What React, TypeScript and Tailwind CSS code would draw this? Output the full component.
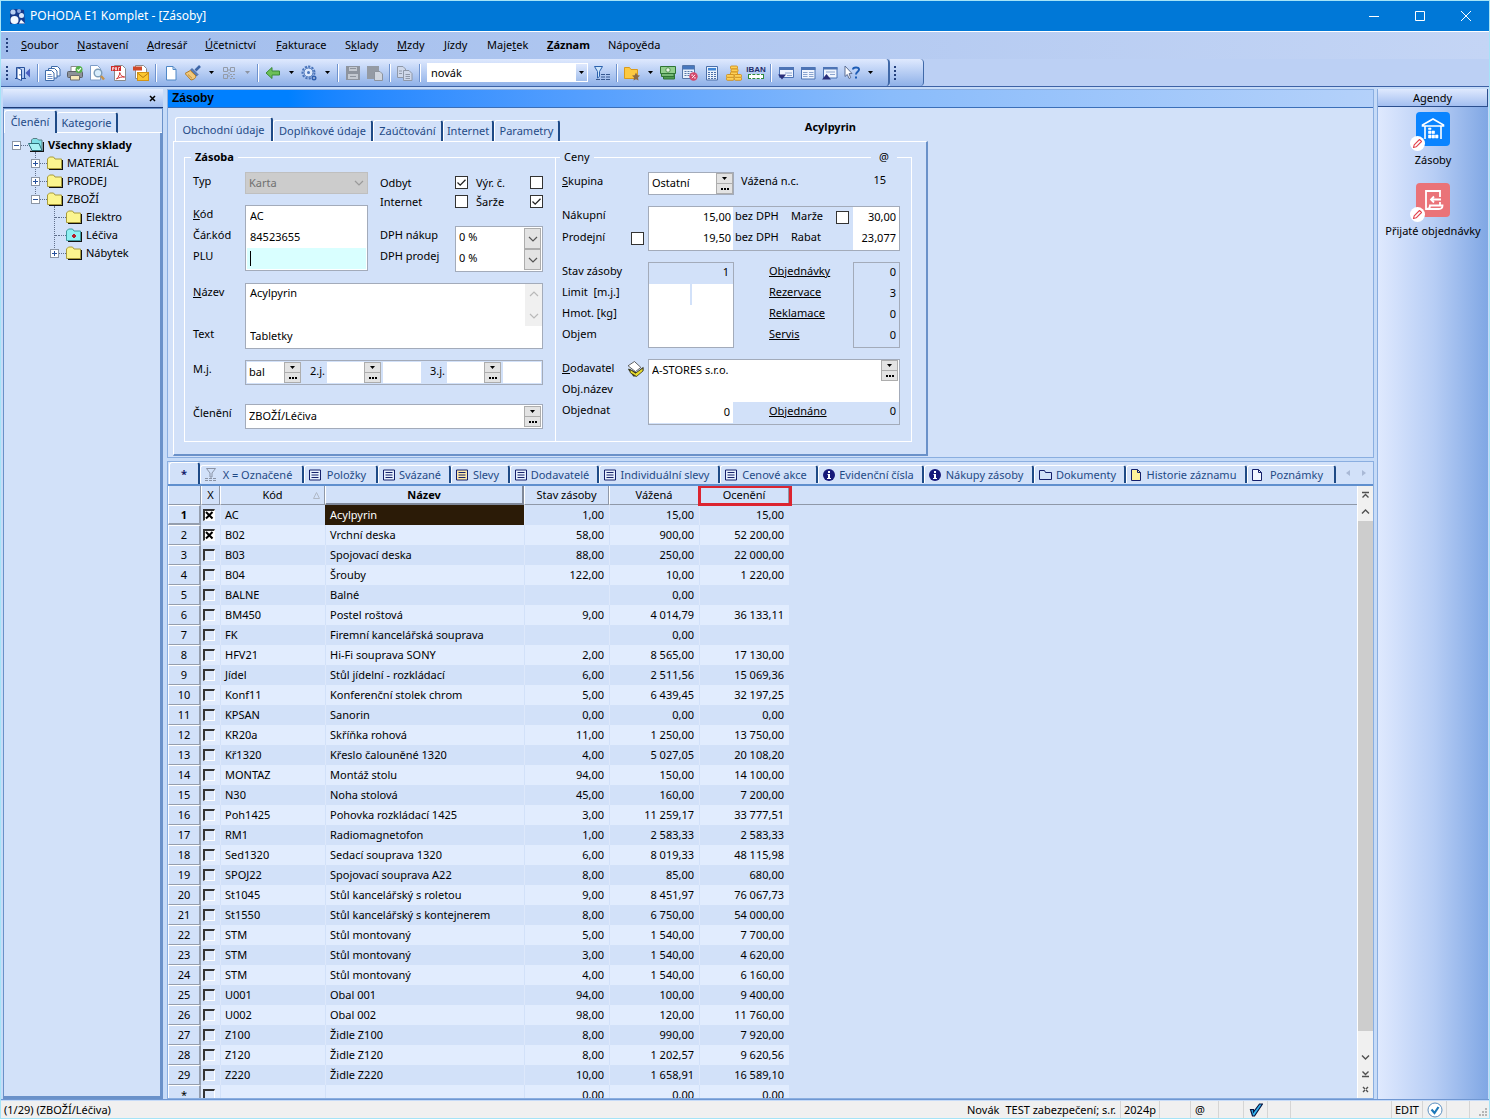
import React from 'react';
import clsx from 'clsx';

/* ---------- toolbar glyphs ---------- */

const Svg = ({ children, size = 16 }: { children: React.ReactNode; size?: number }) => (
  <svg width={size} height={size} viewBox="0 0 16 16" fill="none" aria-hidden="true" className="shrink-0">
    {children}
  </svg>
);

const icons: Record<string, React.ReactNode> = {
  door: (
    <Svg>
      <path d="M1.500 13.500V2.500h8v11M0 13.500h11" stroke="#27509b" />
      <path d="M2 2.500l4.500 2v11L2 13.500z" fill="#fff" stroke="#27509b" />
      <path d="M5 9v1.500" stroke="#27509b" />
      <path d="M15 3.500v9L10.500 8z" fill="#4a5fc0" />
    </Svg>
  ),
  copies: (
    <Svg>
      <path d="M6.500 1.500h6l2.500 2.500v7h-8.500z" fill="#fff" stroke="#3d6aa8" />
      <path d="M3.500 3.500h6l2.500 2.500v7h-8.500z" fill="#fff" stroke="#3d6aa8" />
      <path d="M.5 5.500h6l2.500 2.500v7.500h-8.500z" fill="#fff" stroke="#3d6aa8" />
      <path d="M2.500 9.500h4M2.500 11.500h5M2.500 13.500h5" stroke="#6c8fc4" />
    </Svg>
  ),
  printer: (
    <Svg>
      <path d="M4 1.500h8V7H4z" fill="#fff" stroke="#8a8a8a" />
      <rect x="0.500" y="6.500" width="15" height="6" rx="1" fill="#8d9299" stroke="#5c6066" />
      <path d="M3.500 10.500h9v4.500h-9z" fill="#f6e9bb" stroke="#6d6d6d" />
      <circle cx="12" cy="4.500" r="3.500" fill="#54b04a" />
      <path d="M10.300 4.500l1.400 1.400 2.200-2.800" stroke="#fff" strokeWidth="1.200" />
    </Svg>
  ),
  preview: (
    <Svg>
      <path d="M1.500.5h7l3 3v11.500h-10z" fill="#fff" stroke="#7d9cc8" />
      <circle cx="9" cy="8" r="3.800" fill="#d7ecfb" stroke="#7c9cb8" strokeWidth="1.400" />
      <path d="M12 11l3 3.500" stroke="#c6924a" strokeWidth="2.400" />
    </Svg>
  ),
  pdf: (
    <Svg>
      <path d="M3.500.5h8l3 3v12h-11z" fill="#fff" stroke="#8b8b8b" />
      <path d="M0 1h10v5H0z" fill="#cf2b2b" />
      <path d="M1.500 5.500V2.500h1.500v1.500H1.500M4.500 2.500v2.500h1v-2.500zM7.500 5.500V2.500H9" stroke="#fff" strokeWidth=".7" />
      <path d="M5.500 14c2-2 3.200-4 3.200-6.500 1 3 2.500 4.500 5 4.500-2.500-.3-5.500.3-8.200 2z" stroke="#d03535" />
    </Svg>
  ),
  mail: (
    <Svg>
      <path d="M2.500.5h8l3 3v10h-11z" fill="#fff" stroke="#8b8b8b" />
      <path d="M0 1.500h9v4H0z" fill="#cf4a2b" />
      <rect x="4.500" y="7.500" width="11" height="8" fill="#fbc62f" stroke="#d39417" />
      <path d="M4.500 8l5.500 4.500L15.500 8" stroke="#b97c10" />
    </Svg>
  ),
  page: (
    <Svg>
      <path d="M3.500 1.500h6.500l3 3v10.500h-9.500z" fill="#fff" stroke="#4f87c6" />
      <path d="M10 1.500v3h3" stroke="#4f87c6" />
    </Svg>
  ),
  brush: (
    <Svg>
      <path d="M15 1l-4.500 4.500" stroke="#3e66a8" strokeWidth="2.600" />
      <path d="M7 3.500l6 6-1.500 1.500-6-6z" fill="#5c7fb8" stroke="#32548f" strokeWidth=".7" />
      <path d="M5.300 5.500L0 8.500 6 15c3.500-.5 4.500-2 5-4z" fill="#f1c87a" stroke="#b17c28" />
      <path d="M3 9.500l4 3.800" stroke="#c08d3a" />
    </Svg>
  ),
  qr: (
    <Svg>
      <g stroke="#949ba7">
        <path d="M2.500 2.500h4v4h-4zM9.500 2.500h4v4h-4zM2.500 9.500h4v4h-4z" />
        <path d="M9 9.500h2M12 9.500h2M10 11.500h3M9 13.500h2M12 13.500h2M8 4v8" strokeDasharray="2 1" />
      </g>
    </Svg>
  ),
  back: (
    <Svg>
      <path d="M1 8l6-5.500v3.500h7.500v4H7v3.500z" fill="#6cbf57" stroke="#3b8a36" />
    </Svg>
  ),
  gear: (
    <Svg>
      <circle cx="7.500" cy="7.500" r="6" fill="#b9cff2" stroke="#4a74ba" strokeWidth="2" strokeDasharray="2.200 1.200" />
      <circle cx="7.500" cy="7.500" r="4.500" fill="#dce8fb" stroke="#4a74ba" />
      <circle cx="7.500" cy="7.500" r="1.500" fill="#4a74ba" />
      <circle cx="13" cy="13" r="2.500" fill="#2f5fae" />
      <circle cx="13" cy="13" r=".8" fill="#fff" />
    </Svg>
  ),
  save: (
    <Svg>
      <path d="M1 1h14v14H1z" fill="#8e949e" />
      <path d="M4 2h8v4H4zM3 9h10v5H3z" fill="#c3c8d0" />
      <path d="M5 3.500h6M5 11.500h6" stroke="#8e949e" />
    </Svg>
  ),
  paste: (
    <Svg>
      <path d="M0 1h12v13H0z" fill="#949aa4" />
      <path d="M7.500 6.500h5.500l2.500 2.500v6.500h-8z" fill="#d0d5de" stroke="#8e949e" />
    </Svg>
  ),
  copy: (
    <Svg>
      <path d="M.5 1.500h5.500l2.500 2.500v8.500h-8z" fill="#cfd8ea" stroke="#8f98a8" />
      <path d="M6.500 5.500H12l3 3v7H6.500z" fill="#cfd8ea" stroke="#8f98a8" />
      <path d="M2 6h3M2 8.500h3M8.500 9.500h4.500M8.500 11.500h4.500M8.500 13.500h4.500" stroke="#8f98a8" />
    </Svg>
  ),
  filter: (
    <Svg>
      <path d="M.5 1.500h8L5.500 6.500v5l-2 1.500V6.500z" fill="#cfe6fb" stroke="#2c62ad" />
      <path d="M2 14.500h4M7 14.500h4M12 14.500h4M7 12h4M12 12h4M7 9.500h4M12 9.500h4" stroke="#36588f" />
    </Svg>
  ),
  folderStar: (
    <Svg>
      <path d="M.5 2.500h5l1.500 2h6.500v9H.5z" fill="#fdc940" stroke="#d99a1c" />
      <path d="M12 7.500l1.300 2.700 2.700.4-2 2 .5 3-2.500-1.400-2.500 1.400.5-3-2-2 2.700-.4z" fill="#8d6a44" />
    </Svg>
  ),
  money: (
    <Svg>
      <path d="M3.500 9.500h11v4.500h-11z" fill="#4f9a4f" stroke="#2f7534" />
      <path d="M1.500 6h12.500v5.500H1.500z" fill="#78b978" stroke="#2f7534" />
      <path d="M.5 1.500h15v7H.5z" fill="#93cf8e" stroke="#2f7534" />
      <circle cx="8" cy="5" r="2.200" fill="#e8f6e4" stroke="#2f7534" strokeWidth=".7" />
    </Svg>
  ),
  calcPercent: (
    <Svg>
      <path d="M.5.5h12v13H.5z" fill="#e9f1fc" stroke="#5676a8" />
      <path d="M1 1h11v3.500H1z" fill="#4777bd" />
      <path d="M2.500 6.500h8M2.500 8.500h8M2.500 10.500h6" stroke="#5676a8" strokeDasharray="2 1" />
      <circle cx="11.500" cy="11.500" r="4.200" fill="#d4466b" />
      <path d="M10 13.200l3-3.400" stroke="#fff" />
      <path d="M9.500 9.500h1.300v1.300H9.500zM12.300 12.300h1.300v1.300h-1.300z" fill="#fff" />
    </Svg>
  ),
  calc: (
    <Svg>
      <path d="M2.500 1.500h11v13.500h-11z" fill="#e9f1fc" stroke="#4b6ea8" />
      <path d="M4 3h8v2.500H4z" fill="#3f86d6" />
      <path d="M4 7.500h8M4 9.500h8M4 11.500h8M4 13.500h8" stroke="#4b6ea8" strokeDasharray="2 1" />
    </Svg>
  ),
  coins: (
    <Svg>
      <g fill="#fdd058" stroke="#cf8f1c" strokeWidth=".9">
        <rect x="4.500" y="1" width="7" height="3" rx="1" />
        <rect x="5" y="4" width="7" height="3" rx="1" />
        <rect x="4.500" y="7" width="7" height="3" rx="1" />
        <rect x=".5" y="9.500" width="7.500" height="3" rx="1" />
        <rect x=".5" y="12.300" width="7.500" height="3" rx="1" />
        <rect x="8.500" y="9.500" width="7" height="3" rx="1" />
        <rect x="8.500" y="12.300" width="7" height="3" rx="1" />
      </g>
    </Svg>
  ),
  detail1: (
    <Svg>
      <path d="M1.500 2.500h14v10h-14z" fill="#f0f5fe" stroke="#4d74b5" />
      <path d="M1 2h15v3H1z" fill="#4d74b5" />
      <path d="M7 8h7M9 10.500h5" stroke="#8aa4cf" />
      <path d="M0 9.500h8l-4 5z" fill="#2a2f7a" />
    </Svg>
  ),
  detail2: (
    <Svg>
      <path d="M1.500 2.500h13.500v11.500h-13.500z" fill="#f0f5fe" stroke="#4d74b5" />
      <path d="M1 2h14.500v3H1z" fill="#4d74b5" />
      <path d="M3 7.500h4.500M9 7.500h4.500M3 9.500h4.500M9 9.500h4.500M3 11.500h4.500M9 11.500h4.500" stroke="#8aa4cf" />
    </Svg>
  ),
  detail3: (
    <Svg>
      <path d="M1.500 2.500h13.500v10.500h-13.500z" fill="#f0f5fe" stroke="#4d74b5" />
      <path d="M1 2h14.500v2.500H1z" fill="#4d74b5" />
      <path d="M4 7h9M8 9.500h5" stroke="#8aa4cf" />
      <path d="M0 14.500h9l-4.500-5.500z" fill="#2a2f7a" />
    </Svg>
  ),
};

const ChevronDown = ({ color = '#555' }: { color?: string }) => (
  <svg width="10" height="6" viewBox="0 0 10 6" fill="none" aria-hidden="true">
    <path d="M1 1l4 4 4-4" stroke={color} strokeWidth="1.200" />
  </svg>
);

const Caret = ({ color = '#000' }: { color?: string }) => (
  <svg width="5" height="3" viewBox="0 0 5 3" aria-hidden="true">
    <path d="M0 0h5L2.500 3z" fill={color} />
  </svg>
);

/* ---------- toolbar ---------- */

const ToolBtn = ({ icon, label }: { icon: string; label: string }) => (
  <button type="button" aria-label={label} className="flex h-6 w-[22px] items-center justify-center">
    {icons[icon]}
  </button>
);
const Drop = ({ dim }: { dim?: boolean }) => (
  <button type="button" aria-label="Další možnosti" className="flex h-6 w-[14px] items-center justify-center">
    <Caret color={dim ? '#8c93a0' : '#000'} />
  </button>
);
const Sep = () => (
  <span className="flex w-2 justify-center">
    <span className="h-[18px] w-[2px] border-l border-[#6f93cf] bg-white" />
  </span>
);
const Grip = () => (
  <span className="flex flex-col gap-[2px]">
    {[0, 1, 2, 3].map((i) => (
      <span key={i} className="size-[2px] bg-[#24407c]" />
    ))}
  </span>
);

const Toolbar = () => (
  <div className="flex h-[28px] shrink-0 border-b border-[#3d62a5] bg-[#bcd0f4]">
    <div className="flex items-center rounded-r-sm border-r-2 border-[#4069a8] bg-linear-to-b from-[#dfe9fe] to-[#8fb1e8] pr-[11px] pl-[5px]">
      <span className="w-[6px]"><Grip /></span>
      <ToolBtn icon="door" label="Zavřít agendu" />
      <Sep />
      <ToolBtn icon="copies" label="Sestavy" />
      <ToolBtn icon="printer" label="Tisk" />
      <ToolBtn icon="preview" label="Náhled" />
      <ToolBtn icon="pdf" label="Export PDF" />
      <ToolBtn icon="mail" label="Odeslat PDF" />
      <Sep />
      <ToolBtn icon="page" label="Nový" />
      <ToolBtn icon="brush" label="Formát" />
      <Drop />
      <ToolBtn icon="qr" label="QR kód" />
      <Drop dim />
      <Sep />
      <ToolBtn icon="back" label="Zpět" />
      <Drop />
      <ToolBtn icon="gear" label="Nastavení" />
      <Drop />
      <Sep />
      <ToolBtn icon="save" label="Uložit" />
      <ToolBtn icon="paste" label="Vložit" />
      <Sep />
      <ToolBtn icon="copy" label="Kopírovat" />
      <Sep />
      <span className="mx-[3px] flex h-[19px] w-[161px] bg-white">
        <input aria-label="Hledat" defaultValue="novák" className="min-w-0 flex-1 pl-1 outline-none" />
        <button type="button" aria-label="Historie hledání" className="m-px flex w-[11px] items-center justify-center bg-linear-to-b from-[#dfe9fe] to-[#a3bfec]">
          <Caret />
        </button>
      </span>
      <ToolBtn icon="filter" label="Filtr" />
      <Sep />
      <ToolBtn icon="folderStar" label="Oblíbené" />
      <Drop />
      <ToolBtn icon="money" label="Pokladna" />
      <ToolBtn icon="calcPercent" label="Kalkulačka DPH" />
      <ToolBtn icon="calc" label="Kalkulačka" />
      <ToolBtn icon="coins" label="Měny" />
      <button type="button" className="flex h-6 w-[22px] flex-col items-center justify-center font-['Liberation_Sans'] text-[8px] leading-[8px] font-bold text-[#1f2d6b]">
        IBAN
        <span className="h-[5px] w-4 border border-dashed border-[#2e8a3d] bg-white" />
      </button>
      <Sep />
      <ToolBtn icon="detail1" label="Zobrazit tabulku" />
      <ToolBtn icon="detail2" label="Zobrazit vše" />
      <ToolBtn icon="detail3" label="Zobrazit formulář" />
      <button type="button" aria-label="Nápověda" className="flex h-6 w-[22px] items-center justify-center">
        <Svg>
          <path d="M1 1l7 7.500-3 .2 1.700 4-1.700.8-1.700-4L1 11.500z" fill="#fff" stroke="#5c6e94" />
          <path d="M9 4.500C9 2 15 1.500 15 4.500c0 2.300-3 2.200-3 5" stroke="#1e5db5" strokeWidth="2" />
          <path d="M11 11.500h2v2h-2z" fill="#1e5db5" />
        </Svg>
      </button>
      <Drop />
    </div>
    <div className="flex w-[34px] items-center rounded-r-sm border-r border-[#4069a8] bg-linear-to-b from-[#dfe9fe] to-[#8fb1e8] pl-1">
      <Grip />
    </div>
  </div>
);

/* ---------- menu ---------- */

const menu: { pre?: string; key: string; post: string; w: string; bold?: boolean }[] = [
  { key: 'S', post: 'oubor', w: 'w-[56px]' },
  { key: 'N', post: 'astavení', w: 'w-[70px]' },
  { key: 'A', post: 'dresář', w: 'w-[58px]' },
  { key: 'Ú', post: 'četnictví', w: 'w-[71px]' },
  { key: 'F', post: 'akturace', w: 'w-[69px]' },
  { pre: 'S', key: 'k', post: 'lady', w: 'w-[52px]' },
  { key: 'M', post: 'zdy', w: 'w-[47px]' },
  { key: 'J', post: 'ízdy', w: 'w-[43px]' },
  { pre: 'Maje', key: 't', post: 'ek', w: 'w-[60px]' },
  { key: 'Z', post: 'áznam', w: 'w-[61px]', bold: true },
  { pre: 'Nápo', key: 'v', post: 'ěda', w: 'w-[62px]' },
];

/* ---------- tree ---------- */

const Folder = ({ kind = 'closed' }: { kind?: 'closed' | 'open' | 'current' }) => (
  <svg width="16" height="14" viewBox="0 0 16 14" aria-hidden="true" className="shrink-0">
    <path d="M2 13.500h13.500V4" fill="none" stroke="#111" strokeWidth="1.500" />
    {kind === 'open' ? (
      <>
        <path d="M3.500 5V2l1.500-1.500h4L10.500 2H14v10.500" fill="#7ee0e6" stroke="#5a7f86" />
        <path d="M.5 5.500H11l3 7H4z" fill="#a8f2f4" stroke="#2c6f78" />
      </>
    ) : (
      <path
        d="M.5 12.500V3L2.500 1h4L8 3h6.500v9.500z"
        fill={kind === 'current' ? '#8ff0f2' : '#fbf58f'}
        stroke={kind === 'current' ? '#3e9aa0' : '#a89b3c'}
      />
    )}
    {kind === 'current' && <path d="M7 6h2v4H7zM6 7h4v2H6z" fill="#b5202a" />}
  </svg>
);

const Expander = ({ open }: { open?: boolean }) => (
  <button
    type="button"
    aria-label={open ? 'Sbalit' : 'Rozbalit'}
    className="z-10 grid size-[9px] shrink-0 place-items-center border border-[#8c96a5] bg-white"
  >
    <svg width="5" height="5" viewBox="0 0 5 5" aria-hidden="true">
      <path d={open ? 'M0 2.500h5' : 'M0 2.500h5M2.500 0v5'} stroke="#27509b" />
    </svg>
  </button>
);

const treeRows: { label: string; pad: string; exp?: 'open' | 'closed'; kind?: 'closed' | 'open' | 'current'; bold?: boolean }[] = [
  { label: 'Všechny sklady', pad: 'pl-2', exp: 'open', kind: 'open', bold: true },
  { label: 'MATERIÁL', pad: 'pl-[27px]', exp: 'closed' },
  { label: 'PRODEJ', pad: 'pl-[27px]', exp: 'closed' },
  { label: 'ZBOŽÍ', pad: 'pl-[27px]', exp: 'open' },
  { label: 'Elektro', pad: 'pl-[46px]' },
  { label: 'Léčiva', pad: 'pl-[46px]', kind: 'current' },
  { label: 'Nábytek', pad: 'pl-[46px]', exp: 'closed' },
];

const Sidebar = () => (
  <aside className="flex w-[160px] shrink-0 flex-col">
    <div className="flex h-[19px] items-center justify-end border-b border-[#1d3a75] bg-linear-to-b from-[#e3ecfe] to-[#a3bff0] pr-[6px]">
      <button type="button" aria-label="Zavřít panel" className="flex size-[9px] items-center justify-center">
        <svg width="7" height="7" viewBox="0 0 7 7" aria-hidden="true">
          <path d="M1 1l5 5M6 1L1 6" stroke="#000" strokeWidth="1.500" />
        </svg>
      </button>
    </div>
    <div className="flex flex-1 flex-col border border-[#6a91c9] bg-[#d2e1f9]">
      <div className="flex h-[24px] items-end pt-px text-[#1f4a86]">
        <button type="button" className="h-[23px] w-[53px] rounded-t-[3px] border-t border-r-2 border-l border-t-white border-r-[#1e4a86] border-l-white">Členění</button>
        <button type="button" className="h-[21px] w-[61px] rounded-t-[3px] border-t border-r-2 border-b border-white border-r-[#1e4a86]">Kategorie</button>
        <span className="flex-1 border-b border-white" />
      </div>
      <ul className="relative flex-1 border-r-2 border-b-2 border-[#6a91c9] pt-[3px]">
        <li aria-hidden="true" className="absolute top-[19px] left-[31px] h-[50px] border-l border-dotted border-[#5f6f8c]" />
        <li aria-hidden="true" className="absolute top-[73px] left-[50px] h-[50px] border-l border-dotted border-[#5f6f8c]" />
        {treeRows.map((r) => (
          <li key={r.label} className={clsx('flex h-[18px] items-center', r.pad)}>
            {r.exp ? <Expander open={r.exp === 'open'} /> : <span className="ml-[5px] w-1 border-t border-dotted border-[#5f6f8c]" />}
            <span className="w-[7px] border-t border-dotted border-[#5f6f8c]" />
            <Folder kind={r.kind} />
            <span className={clsx('pl-1 whitespace-nowrap', r.bold && 'font-bold')}>{r.label}</span>
          </li>
        ))}
      </ul>
    </div>
  </aside>
);

/* ---------- form pieces ---------- */

const box = 'border border-[#a3abba] bg-white';

const Spin = ({ label }: { label: string }) => (
  <span className="flex w-[17px] shrink-0 flex-col">
    <button type="button" aria-label={label + ' – seznam'} className="grid h-[11px] place-items-center border border-[#adadad] bg-[#e3e3e3]">
      <Caret />
    </button>
    <button type="button" aria-label={label + ' – výběr'} className="flex h-[10px] items-center justify-center gap-px border border-t-0 border-[#adadad] bg-[#e3e3e3]">
      <span className="size-[2px] bg-black" />
      <span className="size-[2px] bg-black" />
      <span className="size-[2px] bg-black" />
    </button>
  </span>
);

const Check = ({ id, on }: { id: string; on?: boolean }) => (
  <span className="grid size-[13px] shrink-0">
    <input id={id} type="checkbox" defaultChecked={on} className="peer col-start-1 row-start-1 size-[13px] appearance-none border border-[#333] bg-white" />
    <svg width="13" height="13" viewBox="0 0 13 13" fill="none" aria-hidden="true" className="pointer-events-none invisible col-start-1 row-start-1 peer-checked:visible">
      <path d="M2.500 6.500l2.700 2.700 5.300-5.400" stroke="#222" strokeWidth="1.300" />
    </svg>
  </span>
);

const Label = ({ htmlFor, children, className }: { htmlFor: string; children: React.ReactNode; className?: string }) => (
  <label htmlFor={htmlFor} className={clsx('flex h-[21px] items-center pb-[3px] whitespace-pre', className)}>
    {children}
  </label>
);

const Field = ({ id, value = '', className, label, bg = 'bg-white' }: { id?: string; value?: string; className?: string; label?: string; bg?: string }) => (
  <input id={id} aria-label={label} defaultValue={value} className={clsx('h-[21px] min-w-0 pb-[3px] outline-none', bg, className)} />
);

const VatSelect = ({ id }: { id: string }) => (
  <span className="relative flex h-[21px]">
    <select id={id} className="w-full appearance-none bg-white pb-[3px] pl-[2px] outline-none">
      <option>0 %</option>
    </select>
    <span className="pointer-events-none absolute inset-y-0 right-0 grid w-[17px] place-items-center border border-[#adadad] bg-[#e3e3e3]">
      <ChevronDown />
    </span>
  </span>
);

const formTabs: [string, string][] = [
  ['Obchodní údaje', 'w-[98px]'],
  ['Doplňkové údaje', 'w-[100px]'],
  ['Zaúčtování', 'w-[70px]'],
  ['Internet', 'w-[51px]'],
  ['Parametry', 'w-[66px]'],
];

const StockFieldset = () => (
  <fieldset className="w-[372px] border border-white">
    <legend className="ml-[6px] flex h-5 items-center px-1 font-bold">Zásoba</legend>
    <div className="flex flex-col gap-[11px] pt-[5px] pb-3 pl-2">
      <div className="flex">
        <div className="w-[52px]">
          <Label htmlFor="typ">Typ</Label>
          <div className="pt-[12px]">
            <Label htmlFor="kod"><u>K</u>ód</Label>
            <Label htmlFor="ean">Čár.kód</Label>
            <Label htmlFor="plu">PLU</Label>
          </div>
        </div>
        <div className="w-[123px]">
          <span className="relative flex h-[22px]">
            <select id="typ" disabled className="w-full appearance-none border border-[#bfbfbf] bg-[#cccccc] pl-[3px] text-[#707070] opacity-100">
              <option>Karta</option>
            </select>
            <span className="pointer-events-none absolute inset-y-0 right-1 grid place-items-center">
              <ChevronDown color="#9a9a9a" />
            </span>
          </span>
          <div className={clsx(box, 'mt-[11px] flex flex-col pb-px')}>
            <Field id="kod" value="AC" className="pl-1" />
            <Field id="ean" value="84523655" className="pl-1" />
            <span className="mx-px flex bg-[#d9ffff] pl-[3px]">
              <span className="my-[3px] w-px bg-black" />
              <Field id="plu" className="flex-1" bg="bg-[#d9ffff]" />
            </span>
          </div>
        </div>
        <div className="ml-3 flex flex-col pt-px">
          <div className="flex h-[19px] items-center">
            <label htmlFor="odbyt" className="w-[75px]">Odbyt</label>
            <Check id="odbyt" on />
            <label htmlFor="vyr" className="ml-2 w-[54px]">Výr. č.</label>
            <Check id="vyr" />
          </div>
          <div className="flex h-[19px] items-center">
            <label htmlFor="internet" className="w-[75px]">Internet</label>
            <Check id="internet" />
            <label htmlFor="sarze" className="ml-2 w-[54px]">Šarže</label>
            <Check id="sarze" on />
          </div>
          <div className="mt-[15px] flex">
            <div className="w-[75px]">
              <Label htmlFor="dphn">DPH nákup</Label>
              <Label htmlFor="dphp">DPH prodej</Label>
            </div>
            <div className={clsx(box, 'w-[88px] p-px')}>
              <VatSelect id="dphn" />
              <VatSelect id="dphp" />
            </div>
          </div>
        </div>
      </div>

      <div className="flex">
        <div className="flex w-[52px] flex-col justify-between pb-[3px]">
          <Label htmlFor="nazev"><u>N</u>ázev</Label>
          <Label htmlFor="text">Text</Label>
        </div>
        <div className={clsx(box, 'w-[298px] pb-px')}>
          <div className="flex h-[42px]">
            <textarea id="nazev" defaultValue="Acylpyrin" className="flex-1 resize-none pt-px pl-1 leading-4 outline-none" />
            <span className="flex w-[17px] flex-col items-center justify-between bg-[#f0f0f0] py-[7px]">
              <span className="flex rotate-180"><ChevronDown color="#b9b9b9" /></span>
              <ChevronDown color="#b9b9b9" />
            </span>
          </div>
          <Field id="text" value="Tabletky" className="block w-full pl-1" />
        </div>
      </div>

      <div className="flex">
        <Label htmlFor="mj" className="w-[52px]">M.j.</Label>
        <div className={clsx('flex w-[298px] border border-[#a3abba] p-px')}>
          <Field id="mj" value="bal" className="w-[37px] pl-[2px]" />
          <Spin label="Měrná jednotka" />
          <Label htmlFor="mj2" className="w-[26px] justify-end pr-[2px]">2.j.</Label>
          <Field id="mj2" className="w-[37px]" />
          <Spin label="2. jednotka" />
          <Field label="Koeficient 2. jednotky" className="ml-[2px] w-[38px]" />
          <Label htmlFor="mj3" className="w-[26px] justify-end pr-[2px]">3.j.</Label>
          <Field id="mj3" className="w-[37px]" />
          <Spin label="3. jednotka" />
          <Field label="Koeficient 3. jednotky" className="ml-[2px] flex-1" />
        </div>
      </div>

      <div className="flex pt-2">
        <Label htmlFor="cleneni" className="w-[52px]">Členění</Label>
        <div className={clsx(box, 'flex w-[298px] p-px')}>
          <Field id="cleneni" value="ZBOŽÍ/Léčiva" className="flex-1 pl-[2px]" />
          <Spin label="Členění" />
        </div>
      </div>
    </div>
  </fieldset>
);

const PriceFieldset = () => (
  <fieldset className="relative w-[356px] border border-l-0 border-white">
    <legend className="ml-1 flex h-5 items-center px-1">Ceny</legend>
    <span className="absolute -top-5 right-[14px] bg-[#d2e1f9] px-2 leading-5">@</span>
    <div className="flex flex-col gap-[11px] pt-[5px] pl-[6px]">
      <div className="flex">
        <Label htmlFor="skupina" className="w-[86px]"><u>S</u>kupina</Label>
        <div className={clsx(box, 'flex w-[86px]')}>
          <Field id="skupina" value="Ostatní" className="flex-1 pl-[3px]" />
          <Spin label="Skupina" />
        </div>
        <span className="ml-[7px] w-[100px] leading-[17px]">Vážená n.c.</span>
        <span className="w-[45px] text-right leading-[16px]">15</span>
      </div>

      <div className="flex">
        <div className="w-[86px]">
          <Label htmlFor="nakupni">Nákupní</Label>
          <div className="flex h-[23px] items-center justify-between pr-1">
            <Label htmlFor="prodejni">Prodejní</Label>
            <span className="flex">
              <Check id="prodejni-pevna" />
              <label htmlFor="prodejni-pevna" className="sr-only">Pevná prodejní cena</label>
            </span>
          </div>
        </div>
        <div className="flex w-[252px] border border-[#a3abba]">
          <div className="flex w-[84px] shrink-0 flex-col bg-white pb-px">
            <Field id="nakupni" value="15,00" className="pr-[2px] text-right" />
            <Field id="prodejni" value="19,50" className="pr-[2px] text-right" />
          </div>
          <div className="w-[58px] shrink-0 pl-[2px]">
            <span className="block h-[21px] leading-[18px] whitespace-nowrap">bez DPH</span>
            <span className="block h-[21px] leading-[18px] whitespace-nowrap">bez DPH</span>
          </div>
          <div className="w-[62px] shrink-0">
            <div className="flex h-[21px] items-center justify-between pr-1">
              <Label htmlFor="marze-pevna">Marže</Label>
              <Check id="marze-pevna" />
            </div>
            <Label htmlFor="rabat">Rabat</Label>
          </div>
          <div className="flex min-w-0 flex-1 flex-col bg-white">
            <Field label="Marže" value="30,00" className="pr-[3px] text-right" />
            <Field id="rabat" value="23,077" className="pr-[3px] text-right" />
          </div>
        </div>
      </div>

      <div className="flex">
        <div className="w-[86px]">
          <Label htmlFor="stav">Stav zásoby</Label>
          <Label htmlFor="limit">{'Limit  [m.j.]'}</Label>
          <Label htmlFor="hmot">Hmot. [kg]</Label>
          <Label htmlFor="objem">Objem</Label>
        </div>
        <div className="flex w-[86px] flex-col border border-[#a3abba]">
          <output id="stav" className="block h-[21px] pr-1 text-right leading-[17px]">1</output>
          <span className="flex gap-[2px]">
            <Field id="limit" className="flex-1" />
            <Field label="Horní limit" className="flex-1" />
          </span>
          <Field id="hmot" />
          <Field id="objem" />
        </div>
        <div className="ml-[35px] w-[84px]">
          {['Objednávky', 'Rezervace', 'Reklamace', 'Servis'].map((t) => (
            <a key={t} href="#" className="block h-[21px] leading-[18px] underline">{t}</a>
          ))}
        </div>
        <div className="w-[47px] border border-[#a3abba] pr-[3px] text-right">
          {['0', '3', '0', '0'].map((t, i) => (
            <span key={i} className="block h-[21px] leading-[17px]">{t}</span>
          ))}
        </div>
      </div>

      <div className="flex">
        <div className="w-[86px]">
          <div className="flex items-center justify-between pr-1">
            <Label htmlFor="dodavatel"><u>D</u>odavatel</Label>
            <button type="button" aria-label="Otevřít adresář">
              <Svg size={17}>
                <path d="M1 8l5 6.500h3L15.500 9V5.500L9 10.500 1.500 7z" fill="#3a3a1a" />
                <path d="M3 8l5 3.500 7-5v3L9 14.500 3 11z" fill="#e8dc2c" stroke="#222" strokeWidth=".6" />
                <path d="M1 4.500L7 .5l6 5.500-5 4z" fill="#fff" stroke="#333" strokeWidth=".7" />
              </Svg>
            </button>
          </div>
          <Label htmlFor="objnazev">Obj.název</Label>
          <Label htmlFor="objednat">Objednat</Label>
        </div>
        <div className="flex w-[252px] flex-col border border-[#a3abba] pb-px">
          <div className="flex bg-white pr-px">
            <Field id="dodavatel" value="A-STORES s.r.o." className="flex-1 pl-[3px]" />
            <Spin label="Dodavatel" />
          </div>
          <Field id="objnazev" />
          <div className="flex">
            <Field id="objednat" value="0" className="w-[84px] pr-[3px] text-right" />
            <a href="#" className="ml-9 leading-[18px] underline">Objednáno</a>
            <span className="ml-auto pr-[3px] leading-[18px]">0</span>
          </div>
        </div>
      </div>
    </div>
  </fieldset>
);

const FormPanel = () => (
  <section className="flex flex-col border border-[#8aaee0] bg-[#d2e1f9]">
    <h1 className="h-[18px] border-b border-[#3b6fb8] bg-linear-to-r from-[#0080ff] from-10% via-[#8abcfb] via-60% to-[#b4d1fa] pl-1 font-['Liberation_Sans'] text-[12px] leading-[16px] font-bold">
      Zásoby
    </h1>
    <div className="flex w-fit flex-col px-[5px] pt-[9px] pb-px">
      <div className="flex items-end pl-[2px] text-[#1f4a86]">
        {formTabs.map(([t, w], i) => (
          <button
            key={t}
            type="button"
            className={clsx(
              'rounded-t-[3px] border-t border-r-2 border-l border-t-white border-r-[#1e4a86] border-l-white whitespace-nowrap',
              w,
              i === 0 ? 'h-6' : 'h-[21px]',
            )}
          >
            {t}
          </button>
        ))}
        <h2 className="ml-auto self-start pt-[2px] pr-[72px] font-bold text-black">Acylpyrin</h2>
      </div>
      <div className="flex border-t border-r-2 border-b-2 border-l border-t-white border-r-[#6a91c9] border-b-[#6a91c9] border-l-white pt-[5px] pr-[14px] pb-3 pl-[10px]">
        <StockFieldset />
        <PriceFieldset />
      </div>
    </div>
  </section>
);

/* ---------- grid ---------- */

const rows: [string, string, string, string, string][] = [
  ['AC', 'Acylpyrin', '1,00', '15,00', '15,00'],
  ['B02', 'Vrchní deska', '58,00', '900,00', '52 200,00'],
  ['B03', 'Spojovací deska', '88,00', '250,00', '22 000,00'],
  ['B04', 'Šrouby', '122,00', '10,00', '1 220,00'],
  ['BALNE', 'Balné', '', '0,00', ''],
  ['BM450', 'Postel roštová', '9,00', '4 014,79', '36 133,11'],
  ['FK', 'Firemní kancelářská souprava', '', '0,00', ''],
  ['HFV21', 'Hi-Fi souprava SONY', '2,00', '8 565,00', '17 130,00'],
  ['Jídel', 'Stůl jídelní - rozkládací', '6,00', '2 511,56', '15 069,36'],
  ['Konf11', 'Konferenční stolek chrom', '5,00', '6 439,45', '32 197,25'],
  ['KPSAN', 'Sanorin', '0,00', '0,00', '0,00'],
  ['KR20a', 'Skříňka rohová', '11,00', '1 250,00', '13 750,00'],
  ['Kř1320', 'Křeslo čalouněné 1320', '4,00', '5 027,05', '20 108,20'],
  ['MONTAZ', 'Montáž stolu', '94,00', '150,00', '14 100,00'],
  ['N30', 'Noha stolová', '45,00', '160,00', '7 200,00'],
  ['Poh1425', 'Pohovka rozkládací 1425', '3,00', '11 259,17', '33 777,51'],
  ['RM1', 'Radiomagnetofon', '1,00', '2 583,33', '2 583,33'],
  ['Sed1320', 'Sedací souprava 1320', '6,00', '8 019,33', '48 115,98'],
  ['SPOJ22', 'Spojovací souprava A22', '8,00', '85,00', '680,00'],
  ['St1045', 'Stůl kancelářský s roletou', '9,00', '8 451,97', '76 067,73'],
  ['St1550', 'Stůl kancelářský s kontejnerem', '8,00', '6 750,00', '54 000,00'],
  ['STM', 'Stůl montovaný', '5,00', '1 540,00', '7 700,00'],
  ['STM', 'Stůl montovaný', '3,00', '1 540,00', '4 620,00'],
  ['STM', 'Stůl montovaný', '4,00', '1 540,00', '6 160,00'],
  ['U001', 'Obal 001', '94,00', '100,00', '9 400,00'],
  ['U002', 'Obal 002', '98,00', '120,00', '11 760,00'],
  ['Z100', 'Židle Z100', '8,00', '990,00', '7 920,00'],
  ['Z120', 'Židle Z120', '8,00', '1 202,57', '9 620,56'],
  ['Z220', 'Židle Z220', '10,00', '1 658,91', '16 589,10'],
  ['', '', '0,00', '0,00', '0,00'],
];

const TabIcon = ({ kind }: { kind: string }) => {
  if (kind === 'list' || kind === 'listY')
    return (
      <svg width="12" height="12" viewBox="0 0 12 12" aria-hidden="true">
        <path d="M.5 1h11v10H.5z" fill={kind === 'listY' ? '#ffe9a8' : '#e6effd'} stroke="#15206b" />
        <path d="M2.500 3.500h7M2.500 6h7M2.500 8.500h7" stroke="#15206b" />
      </svg>
    );
  if (kind === 'info')
    return (
      <svg width="12" height="12" viewBox="0 0 12 12" aria-hidden="true">
        <circle cx="6" cy="6" r="6" fill="#15187a" />
        <path d="M5 2h2v2H5zM4.500 5H7v4h1v1H4V9h1V6h-.5z" fill="#fff" />
      </svg>
    );
  if (kind === 'folder')
    return (
      <svg width="13" height="12" viewBox="0 0 13 12" fill="none" aria-hidden="true">
        <path d="M.5 10.500v-9h5l1 2h6v7z" stroke="#15206b" />
      </svg>
    );
  if (kind === 'filter')
    return (
      <svg width="12" height="13" viewBox="0 0 12 13" fill="none" aria-hidden="true">
        <path d="M1.500.5h9L7 5v4H5V5z" stroke="#8a93a5" />
        <path d="M0 10.500h12M0 12.500h12" stroke="#8a93a5" strokeDasharray="3 1" />
      </svg>
    );
  return (
    <svg width="11" height="12" viewBox="0 0 11 12" aria-hidden="true">
      <path d="M.5.5h6l3 3v8h-9z" fill={kind === 'pageY' ? '#fff39a' : '#f2f7ff'} stroke="#15206b" />
      <path d="M6.500.5v3h3" fill="none" stroke="#15206b" />
    </svg>
  );
};

const gridTabs: [string, string, string][] = [
  ['filter', 'X = Označené', 'w-[104px]'],
  ['list', 'Položky', 'w-[74px]'],
  ['list', 'Svázané', 'w-[73px]'],
  ['listY', 'Slevy', 'w-[59px]'],
  ['list', 'Dodavatelé', 'w-[89px]'],
  ['list', 'Individuální slevy', 'w-[121px]'],
  ['list', 'Cenové akce', 'w-[98px]'],
  ['info', 'Evidenční čísla', 'w-[106px]'],
  ['info', 'Nákupy zásoby', 'w-[110px]'],
  ['folder', 'Dokumenty', 'w-[92px]'],
  ['pageY', 'Historie záznamu', 'w-[121px]'],
  ['page', 'Poznámky', 'w-[89px]'],
];

const GridCheck = ({ on, label }: { on?: boolean; label: string }) => (
  <span className="mb-px ml-[2px] grid size-[12px]">
    <input
      type="checkbox"
      aria-label={label}
      defaultChecked={on}
      className="peer col-start-1 row-start-1 size-[12px] appearance-none border-t-2 border-r border-b border-l-2 border-t-[#333] border-r-white border-b-white border-l-[#333] bg-[#dce8fb] checked:bg-white"
    />
    <svg width="12" height="12" viewBox="0 0 12 12" aria-hidden="true" className="pointer-events-none invisible col-start-1 row-start-1 peer-checked:visible">
      <path d="M3 3l6.500 6.500M9.500 3L3 9.500" stroke="#000" strokeWidth="2" />
    </svg>
  </span>
);

const ScrollGlyph = ({ d, label }: { d: string; label: string }) => (
  <button type="button" aria-label={label} className="grid h-4 w-full place-items-center">
    <svg width="9" height="9" viewBox="0 0 9 9" fill="none" aria-hidden="true">
      <path d={d} stroke="#505050" strokeWidth="1.400" />
    </svg>
  </button>
);

const th = 'border-r border-b border-l border-r-[#8f98a8] border-b-[#8f98a8] border-l-white font-normal';

const GridPanel = () => (
  <section className="mt-[3px] flex min-h-0 flex-1 flex-col border border-[#8aaee0] bg-[#d2e1f9]">
    <nav aria-label="Záložky tabulky" className="flex h-[24px] shrink-0 border-b-2 border-[#5f8fce] pl-px text-[#1f4a86]">
      <button type="button" className="h-[22px] w-[31px] shrink-0 rounded-t-[3px] border-t border-r-2 border-l border-t-white border-r-[#1e4a86] border-l-white font-bold text-[#15206b]">*</button>
      {gridTabs.map(([icon, t, w]) => (
        <button
          key={t}
          type="button"
          className={clsx('mt-[3px] flex h-[18px] shrink-0 items-center rounded-t-[3px] border-t border-r-2 border-l border-t-white border-r-[#1e4a86] border-l-white px-1 whitespace-nowrap', w)}
        >
          <TabIcon kind={icon} />
          <span className="flex-1 text-center">{t}</span>
        </button>
      ))}
      <span className="flex w-9 items-center justify-center gap-3 pl-1">
        <button type="button" aria-label="Předchozí záložky"><svg width="4" height="6" viewBox="0 0 4 6"><path d="M4 0v6L0 3z" fill="#a9b9d6" /></svg></button>
        <button type="button" aria-label="Další záložky"><svg width="4" height="6" viewBox="0 0 4 6"><path d="M0 0v6l4-3z" fill="#a9b9d6" /></svg></button>
      </span>
    </nav>
    <div className="flex min-h-0 flex-1">
      <div className="min-w-0 flex-1 overflow-hidden">
        <div className="flex">
          <table className="w-[621px] shrink-0 table-fixed border-separate border-spacing-0">
            <thead>
              <tr className="h-[19px]">
                <th className={clsx(th, 'w-[33px]')} aria-label="Řádek" />
                <th className={clsx(th, 'w-[19px]')}>X</th>
                <th className={clsx(th, 'w-[105px]')}>
                  <span className="flex items-center pr-1 pl-[11px]">
                    <span className="flex-1 text-center">Kód</span>
                    <svg width="7" height="7" viewBox="0 0 7 7" fill="none" aria-hidden="true"><path d="M.5 6.500h6L3.500.5z" stroke="#b0b8c6" /></svg>
                  </span>
                </th>
                <th className="w-[199px] border-r-2 border-b-2 border-l border-r-[#7f8899] border-b-[#7f8899] border-l-white font-bold">Název</th>
                <th className={clsx(th, 'w-[85px]')}>Stav zásoby</th>
                <th className={clsx(th, 'w-[90px]')}>Vážená</th>
                <th className={clsx(th, 'relative w-[90px]')}>
                  Ocenění
                  <span className="absolute -right-[4px] -bottom-[2px] -left-[2px] -top-px z-10 border-[3px] border-[#dc2430]" />
                </th>
              </tr>
            </thead>
            <tbody>
              {rows.map(([code, name, qty, avg, val], i) => {
                const alt = i % 2 === 1;
                const cell = alt ? 'border-l border-[#d2e1f9] bg-[#e1ecfe]' : 'border-l border-[#dde8fb]';
                return (
                  <tr key={i} className="h-5">
                    <th
                      scope="row"
                      className={clsx(
                        'border-t border-r-2 border-b border-l border-t-white border-r-[#959eae] border-b-[#959eae] border-l-white',
                        i === 0 ? 'border-b-2 font-bold' : 'font-normal',
                      )}
                    >
                      {i === 29 ? '*' : i + 1}
                    </th>
                    <td className={alt ? 'bg-[#e1ecfe]' : ''}><GridCheck on={i < 2} label={`Označit řádek ${i + 1}`} /></td>
                    <td className={clsx(cell, 'pl-1')}>{code}</td>
                    <td className={clsx('border-l pl-1 whitespace-nowrap', i === 0 ? 'border-[#2b1b07] bg-[#2b1b07] text-white' : cell)}>{name}</td>
                    <td className={clsx(cell, 'pr-[5px] text-right')}>{qty}</td>
                    <td className={clsx(cell, 'pr-[5px] text-right')}>{avg}</td>
                    <td className={clsx(cell, 'pr-[5px] text-right')}>{val}</td>
                  </tr>
                );
              })}
            </tbody>
          </table>
          <span className="h-[19px] flex-1 border-b border-[#8f98a8]" />
        </div>
      </div>
      <div className="flex w-[16px] shrink-0 flex-col border-l border-white bg-[#f0f0f0] py-px">
        <ScrollGlyph label="Na začátek" d="M1 1.500h7M1.500 6.500l3-3 3 3" />
        <ScrollGlyph label="Nahoru" d="M1 6.500l3.500-3.500 3.500 3.500" />
        <span className="mt-[2px] flex-1 bg-[#cdcdcd]" />
        <span className="h-[18px]" />
        <ScrollGlyph label="Dolů" d="M1 2.500l3.500 3.500 3.500-3.500" />
        <ScrollGlyph label="Na konec" d="M1.500 2.500l3 3 3-3M1 7.500h7" />
        <ScrollGlyph label="Nový záznam" d="M2 2l2 2M7 2L5 4M2 7l2-2M7 7L5 5" />
      </div>
    </div>
  </section>
);

/* ---------- right bar ---------- */

const PencilBadge = () => (
  <span className="absolute -bottom-[5px] -left-[6px] grid size-[15px] place-items-center rounded-full bg-white">
    <svg width="11" height="11" viewBox="0 0 11 11" fill="none" aria-hidden="true">
      <path d="M1.500 9.500l.7-2.700 5.300-5.300 2 2-5.300 5.300z" stroke="#e2444e" strokeWidth="1.100" strokeLinejoin="round" />
    </svg>
  </span>
);

const Agendas = () => (
  <aside className="flex w-[111px] shrink-0 flex-col border-l border-[#8aaee0] bg-linear-to-r from-[#dfe9fe] via-[#b8cef5] to-[#80a7e4]">
    <h2 className="h-[18px] border-r border-b border-[#2b4f8e] bg-linear-to-b from-[#dfe9fe] to-[#a3bff0] text-center leading-[17px]">Agendy</h2>
    <a href="#" className="mt-[5px] flex flex-col items-center">
      <span className="relative grid size-[34px] place-items-center rounded-[4px] bg-[#0a84ff]">
        <svg width="24" height="24" viewBox="0 0 24 24" fill="none" stroke="#fff" strokeWidth="1.600" aria-hidden="true">
          <path d="M1.500 8L12 2l10.500 6v1H1.500zM4 9v13M20 9v13" />
          <path d="M7.500 21v-3h2.500v3zM11 21v-3h2.500v3zM14.500 21v-3H17v3zM7.500 16.500v-2.500h2.500v2.500zM11 16.500v-2.500h2.500v2.500zM7.500 12.500v-1.500h2.500v1.500z" fill="#fff" strokeWidth=".6" />
        </svg>
        <PencilBadge />
      </span>
      <span className="mt-[5px] leading-[18px]">Zásoby</span>
    </a>
    <a href="#" className="mt-[14px] flex flex-col items-center">
      <span className="relative grid size-[34px] place-items-center rounded-[4px] bg-[#ea7378]">
        <svg width="24" height="24" viewBox="0 0 24 24" fill="none" stroke="#fff" strokeWidth="1.800" aria-hidden="true">
          <path d="M19 9V3H5v18h13c2.500 0 3.500-1.500 3.500-3.500H9c0 2.500-1.500 3.500-3 3.500M19 14v3" />
          <path d="M20 11.500H10M13 8.500l-3 3 3 3" />
        </svg>
        <PencilBadge />
      </span>
      <span className="mt-[5px] leading-[18px] whitespace-nowrap">Přijaté objednávky</span>
    </a>
  </aside>
);

/* ---------- status bar ---------- */

const StatusBar = () => {
  const c = 'flex h-full items-center border-r border-[#d5d5d5] whitespace-nowrap';
  return (
    <footer className="flex h-[17px] shrink-0 items-center bg-[#f0f0f0]">
      <span className="flex-1 pl-[3px]">(1/29) (ZBOŽÍ/Léčiva)</span>
      <span className={clsx(c, 'w-[154px] gap-[6px] overflow-hidden')}><span>Novák</span><span>TEST zabezpečení; s.r.</span></span>
      <span className={clsx(c, 'w-[39px] justify-center')}>2024p</span>
      <span className={clsx(c, 'w-[31px]')} />
      <span className={clsx(c, 'w-[28px] pl-1')}>@</span>
      <span className={clsx(c, 'w-[25px]')} />
      <span className={clsx(c, 'w-[24px] justify-center')}>
        <svg width="14" height="14" viewBox="0 0 14 14" aria-hidden="true">
          <path d="M1.500 6.500h3V9l6-8h3l-8 12h-2z" fill="#33b5f0" stroke="#06123f" strokeWidth="1.200" />
        </svg>
      </span>
      <span className={clsx(c, 'w-[23px]')} />
      <span className={clsx(c, 'w-[101px]')} />
      <span className={clsx(c, 'w-[31px] justify-center')}>EDIT</span>
      <span className={clsx(c, 'w-[24px] justify-center')}>
        <svg width="16" height="16" viewBox="0 0 16 16" fill="none" aria-hidden="true">
          <circle cx="8" cy="8" r="7" fill="#fff" stroke="#5b8fc0" />
          <path d="M4.500 7.500l3 3.500 4-6" stroke="#1d78b8" strokeWidth="2.200" />
        </svg>
      </span>
      <span className={clsx(c, 'w-[23px]')} />
      <span className="flex w-[19px] items-end justify-end self-end pr-px pb-px">
        <svg width="9" height="9" viewBox="0 0 9 9" fill="#b5b5b5" aria-hidden="true">
          <path d="M6 0h2v2H6zM6 3h2v2H6zM6 6h2v2H6zM3 3h2v2H3zM3 6h2v2H3zM0 6h2v2H0z" />
        </svg>
      </span>
    </footer>
  );
};

/* ---------- window ---------- */

export default function App() {
  return (
    <div className="flex h-screen flex-col overflow-hidden border border-[#a5e4f7] bg-[#c6dbf8] font-['Noto_Sans','Open_Sans',sans-serif] text-[11px] leading-4 text-black">
      <header className="flex h-[30px] shrink-0 items-center bg-[#0078d7] pl-2 text-white">
        <svg width="17" height="17" viewBox="0 0 17 17" aria-hidden="true">
          <path d="M1 2l6-1 8 1 1 14H1z" fill="#163a8c" />
          <circle cx="4" cy="4" r="2.600" fill="#b9cff2" />
          <circle cx="10" cy="3" r="2" fill="#8fa9e0" />
          <circle cx="5.500" cy="12" r="4" fill="#f3f8ff" />
          <circle cx="12.500" cy="7.500" r="2.500" fill="#dbe8fb" />
          <path d="M10 15.500l2-4 4 4z" fill="#f3f8ff" />
        </svg>
        <span className="flex-1 pl-1 text-[12px]">POHODA E1 Komplet - [Zásoby]</span>
        {[
          ['Minimalizovat', 'M0 5.500h10'],
          ['Maximalizovat', 'M.5.5h9v9h-9z'],
          ['Zavřít', 'M0 0l10 10M10 0L0 10'],
        ].map(([l, d]) => (
          <button key={l} type="button" aria-label={l} className="grid h-full w-[46px] place-items-center">
            <svg width="10" height="10" viewBox="0 0 10 10" fill="none" aria-hidden="true"><path d={d} stroke="#fff" /></svg>
          </button>
        ))}
      </header>
      <nav aria-label="Hlavní nabídka" className="flex h-[28px] shrink-0 items-center border-t border-white bg-linear-to-r from-[#a0bcec] to-[#c4d5f5] pb-[2px] pl-[5px]">
        <Grip />
        <span className="w-[13px]" />
        {menu.map((m) => (
          <button key={m.key + m.post} type="button" className={clsx('text-left whitespace-nowrap', m.w, m.bold && 'font-bold')}>
            {m.pre}<u>{m.key}</u>{m.post}
          </button>
        ))}
      </nav>
      <Toolbar />
      <div className="flex min-h-0 flex-1 pt-[2px] pr-px pl-[2px]">
        <Sidebar />
        <main className="mr-[3px] ml-1 flex min-w-0 flex-1 flex-col">
          <FormPanel />
          <GridPanel />
        </main>
        <Agendas />
      </div>
      <div className="h-[2px] shrink-0 border-t border-[#6f97d2]" />
      <StatusBar />
    </div>
  );
}
